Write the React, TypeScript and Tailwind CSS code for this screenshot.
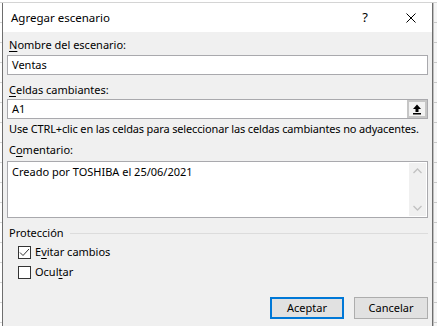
import React from 'react';

const font = { fontFamily: '"Noto Sans", "Open Sans", sans-serif' };

const Label: React.FC<{ before?: string; u: string; after: string }> = ({ before = '', u, after }) => (
    <div className="text-[11px] leading-[14px] text-black">
        {before}
        <span className="underline underline-offset-2">{u}</span>
        {after}
    </div>
);

const App: React.FC = () => {
    return (
        <div className="w-[437px] h-[326px] bg-white flex flex-col overflow-hidden" style={font}>
            {/* spreadsheet peeking behind */}
            <div className="h-[3px] border-b border-[#d4d4d4] bg-white" />
            <div className="flex flex-1">
                <div className="w-[2px] bg-[repeating-linear-gradient(to_bottom,#ffffff_0px,#ffffff_19px,#d4d4d4_19px,#d4d4d4_20px)]" />
                <div className="w-[431px] flex flex-col border-l border-r border-[#6e6e6e] bg-[#f0f0f0]">
                    {/* title bar */}
                    <div className="h-[29px] bg-white flex items-center pl-[8px]">
                        <span className="text-[11.5px] text-black">Agregar escenario</span>
                        <span className="ml-auto text-[13px] text-black mr-[38px]">?</span>
                        <svg width="10" height="10" viewBox="0 0 10 10" className="mr-[16px]">
                            <path d="M0.5 0.5 L9.5 9.5 M9.5 0.5 L0.5 9.5" stroke="#000" strokeWidth="1" />
                        </svg>
                    </div>

                    <div className="flex flex-col px-[4px] pt-[6px]">
                        <div className="pl-[2px]"><Label u="N" after="ombre del escenario:" /></div>
                        <div className="mt-[3px] h-[20px] bg-white border border-[#a9a9ad] flex items-center px-[4px] text-[11px]">Ventas</div>

                        <div className="pl-[2px] mt-[8px]"><Label u="C" after="eldas cambiantes:" /></div>
                        <div className="mt-[2px] h-[20px] bg-white border border-[#a9a9ad] flex items-center text-[11px]">
                            <span className="pl-[4px]">A1</span>
                            <div className="ml-auto w-[20px] h-[18px] border-2 border-[#c6c6c6] bg-[#f2f2f2] flex items-center justify-center">
                                <svg width="10" height="11" viewBox="0 0 10 11">
                                    <path d="M5 0.5 L9 5 H6.5 V8 H3.5 V5 H1 Z" fill="#000" />
                                    <rect x="1" y="9" width="8" height="1.5" fill="#000" />
                                </svg>
                            </div>
                        </div>

                        <div className="pl-[2px] mt-[3px] text-[11px] leading-[14px] whitespace-nowrap tracking-[-0.15px]">
                            Use CTRL+clic en las celdas para seleccionar las celdas cambiantes no adyacentes.
                        </div>

                        <div className="pl-[2px] mt-[7px]"><Label before="C" u="o" after="mentario:" /></div>
                        <div className="mt-[4px] h-[57px] bg-white border border-[#a9a9ad] flex">
                            <div className="flex-1 px-[4px] pt-[3px] text-[11px] leading-[14px]">Creado por TOSHIBA el 25/06/2021</div>
                            <div className="w-[17px] my-[1px] mr-[1px] bg-[#f0f0f0] flex flex-col items-center justify-between py-[5px]">
                                <svg width="9" height="6" viewBox="0 0 9 6">
                                    <path d="M0.5 5 L4.5 1 L8.5 5" stroke="#c2c2c2" strokeWidth="1.3" fill="none" />
                                </svg>
                                <svg width="9" height="6" viewBox="0 0 9 6">
                                    <path d="M0.5 1 L4.5 5 L8.5 1" stroke="#c2c2c2" strokeWidth="1.3" fill="none" />
                                </svg>
                            </div>
                        </div>

                        <div className="mt-[8px] flex items-center pl-[2px]">
                            <span className="text-[11px] leading-[14px]">Protección</span>
                            <div className="flex-1 h-px bg-[#dcdcdc] ml-[6px]" />
                        </div>

                        <div className="flex flex-col gap-[6px] mt-[5px] pl-[11px]">
                            <div className="flex items-center gap-[4px]">
                                <div className="w-[13px] h-[13px] border border-[#333] bg-white flex items-center justify-center">
                                    <svg width="11" height="9" viewBox="0 0 11 9">
                                        <path d="M1 4.5 L4 7.5 L10 1" stroke="#333" strokeWidth="1" fill="none" />
                                    </svg>
                                </div>
                                <Label before="E" u="v" after="itar cambios" />
                            </div>
                            <div className="flex items-center gap-[4px]">
                                <div className="w-[13px] h-[13px] border border-[#333] bg-white" />
                                <Label before="Ocul" u="t" after="ar" />
                            </div>
                        </div>

                        <div className="flex justify-end gap-[10px] mt-[18px]">
                            <button className="w-[74px] h-[22px] bg-[#e1e1e1] border-2 border-[#0078d7] text-[11px] text-black">Aceptar</button>
                            <button className="w-[74px] h-[22px] bg-[#e1e1e1] border border-[#adadad] text-[11px] text-black">Cancelar</button>
                        </div>
                    </div>
                </div>
                <div className="flex-1 bg-[repeating-linear-gradient(to_bottom,#f5f5f5_0px,#f5f5f5_19px,#c8c8c8_19px,#c8c8c8_20px)] border-l border-[#c0c0c0]" />
            </div>
        </div>
    );
};

export default App;
